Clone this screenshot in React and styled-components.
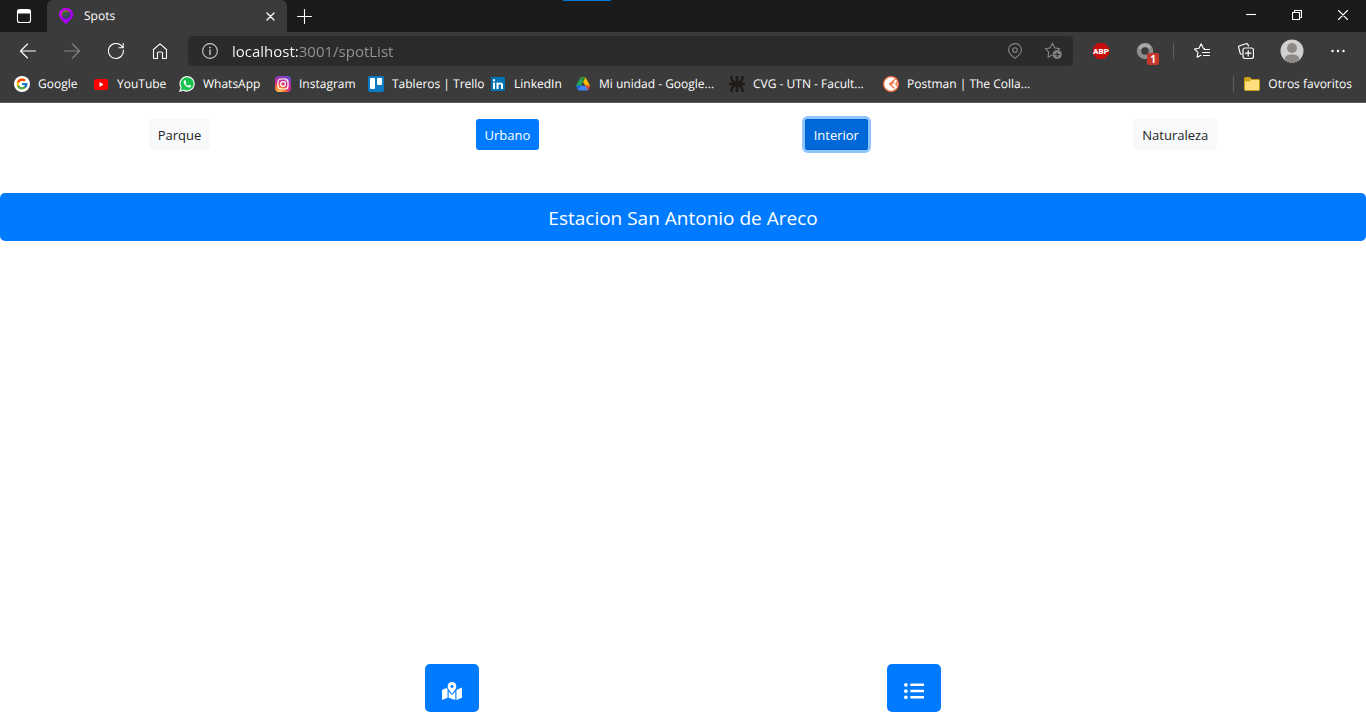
import React, { useState } from "react";
import styled, { createGlobalStyle, css } from "styled-components";
import { FaMapMarkedAlt, FaListUl } from "react-icons/fa";
import { FcGoogle } from "react-icons/fc";

const GlobalStyle = createGlobalStyle`
  *, *::before, *::after { box-sizing: border-box; }
  body {
    margin: 0;
    background: #fff;
    font-family: "Open Sans", "Noto Sans", sans-serif;
    text-rendering: geometricPrecision;
  }
  button { font-family: inherit; cursor: pointer; }
`;

const Window = styled.div`
  display: flex;
  flex-direction: column;
  min-height: 100vh;
`;

const Chrome = styled.header`
  background: #3b3b3b;
  color: #fff;
  border-bottom: 1px solid #5c5c5c;
`;

const TabStrip = styled.div`
  position: relative;
  display: flex;
  height: 32px;
  background: #1b1b1b;
`;

const LoadingMark = styled.span`
  position: absolute;
  top: 0;
  left: 563px;
  width: 48px;
  height: 1px;
  background: #0078d7;
`;

const ChromeButton = styled.button`
  display: flex;
  flex: none;
  align-items: center;
  justify-content: center;
  width: ${(p) => p.$width || 44}px;
  height: 32px;
  padding: 0;
  border: 0;
  background: none;
  color: ${(p) => (p.$muted ? "#858585" : "#fff")};
`;

const Tab = styled.div`
  display: flex;
  align-items: center;
  width: 240px;
  height: 32px;
  padding: 0 4px 0 11px;
  border-radius: 6px 6px 0 0;
  background: #3b3b3b;
`;

const TabTitle = styled.span`
  flex: 1;
  padding-left: 10px;
  font-size: 12px;
  line-height: 16px;
`;

const WindowControls = styled.div`
  display: flex;
  height: 30px;
  align-items: center;
  margin-left: auto;
`;

const Toolbar = styled.div`
  display: flex;
  align-items: center;
  height: 38px;
  padding: 0 6px;
`;

const AddressBar = styled.label`
  display: flex;
  flex: 1;
  align-items: center;
  height: 30px;
  margin: 0 6px;
  padding: 0 1px 0 0;
  border-radius: 4px;
  background: #2b2b2b;
`;

const AddressInput = styled.input`
  flex: 1;
  min-width: 0;
  height: 24px;
  padding: 0;
  border: 0;
  outline: 0;
  background: linear-gradient(90deg, #fff 66px, #969696 66px);
  background-clip: text;
  -webkit-background-clip: text;
  color: transparent;
  font-family: inherit;
  font-size: 15px;
  line-height: 24px;
`;

const Divider = styled.span`
  flex: none;
  width: 1px;
  height: 16px;
  margin: 0 6px;
  background: #5e5e5e;
`;

const ProfileGroup = styled.div`
  display: flex;
  gap: 2px;
  padding-left: 2px;
`;

const BadgedIcon = styled.span`
  position: relative;
  display: flex;
`;

const Badge = styled.span`
  position: absolute;
  top: 11px;
  left: 11px;
  width: 12px;
  height: 12px;
  border-radius: 2px;
  background: #c5372c;
  color: #fff;
  font-size: 10px;
  font-weight: 700;
  line-height: 12px;
  text-align: center;
`;

const BookmarksBar = styled.nav`
  display: flex;
  align-items: center;
  height: 32px;
  padding: 0 14px 4px;
`;

const Bookmark = styled.a`
  display: flex;
  flex: none;
  align-items: center;
  gap: 8px;
  width: ${(p) => (p.$width ? `${p.$width}px` : "auto")};
  color: #fff;
  font-size: 12px;
  line-height: 16px;
  text-decoration: none;
  white-space: nowrap;

  svg { flex: none; }
`;

const OtherBookmarks = styled.div`
  display: flex;
  align-items: center;
  margin-left: auto;
  gap: 10px;
`;

const BarRule = styled.span`
  width: 1px;
  height: 16px;
  background: #5e5e5e;
`;

const Page = styled.main`
  display: flex;
  flex: 1;
  flex-direction: column;
`;

const Filters = styled.div`
  display: flex;
  justify-content: space-around;
  padding: 16px 16px 43px;
`;

const variants = {
  light: css`
    background: #f8f9fa;
    color: #212529;
  `,
  primary: css`
    background: #007bff;
    color: #fff;
  `,
  active: css`
    background: #0069d9;
    color: #fff;
    box-shadow: inset 0 0 0 1px #0062cc, 0 0 0 3px #8ec5ff;
  `,
};

const FilterButton = styled.button`
  height: 31px;
  padding: 2px 9px 0;
  border: 0;
  border-radius: 3px;
  font-size: 13px;
  line-height: 21px;
  ${(p) => variants[p.$variant]}
`;

const SpotButton = styled.button`
  width: 100%;
  height: 48px;
  padding: 2px 16px 0;
  border: 0;
  border-radius: 5px;
  background: #007bff;
  color: #fff;
  font-size: 19px;
  line-height: 30px;
`;

const ViewSwitch = styled.footer`
  display: flex;
  justify-content: space-evenly;
  margin-top: auto;
  padding: 16px 16px 15px;
`;

const ViewButton = styled.button`
  height: 48px;
  padding: 10px 17px 8px;
  border: 0;
  border-radius: 5px;
  background: #007bff;
  color: #fff;
  font-size: 20px;
  line-height: 30px;

  svg { vertical-align: middle; }
`;

const Line = ({ size = 16, children, ...rest }) => (
  <svg width={size} height={size} viewBox={`0 0 ${size} ${size}`} fill="none" stroke="currentColor" strokeWidth="1.1" strokeLinejoin="round" strokeLinecap="round" aria-hidden="true" {...rest}>
    {children}
  </svg>
);

const TabsIcon = () => (
  <Line>
    <rect x="1.5" y="1.5" width="13" height="13" rx="2" />
    <path d="M2 2.5h12v2.5H2z" fill="currentColor" />
  </Line>
);
const SpotsIcon = () => (
  <svg width="16" height="16" viewBox="0 0 16 16" aria-hidden="true">
    <path d="M8 0C4 0 1 3 1 6.600 1 10.500 5 12.500 8 16c3-3.500 7-5.500 7-9.400C15 3 12 0 8 0z" fill="#c800ff" />
    <path d="M15 6.600C15 10.500 11 12.500 8 16 7 14.800 5 13 3.800 11.800L13.500 2.500C14.500 3.700 15 5 15 6.600z" fill="#a300f5" />
    <circle cx="8" cy="6.800" r="4.300" fill="#38405c" />
    <path d="M4 8.500C3 5 5.200 2.300 8.500 2.300l3 1.600-6 .8z" fill="#6b8708" />
    <path d="M5.500 5.500h5v3h-5z" fill="#40525a" />
  </svg>
);
const CloseIcon = () => <Line size={9} strokeWidth="1.300"><path d="M1 1l7 7M8 1l-7 7" /></Line>;
const PlusIcon = () => <Line size={15}><path d="M7.500.5v14M.5 7.500h14" /></Line>;
const MinimizeIcon = () => <Line size={10} strokeLinecap="butt"><path d="M0 4.500h10" /></Line>;
const RestoreIcon = () => <Line size={10} strokeLinejoin="miter"><path d="M.5 2.500h7v7h-7zM2.500 2.500v-2h7v7h-2" /></Line>;
const BigCloseIcon = () => <Line size={10}><path d="M.5.5l9 9M9.500.5l-9 9" /></Line>;
const BackIcon = () => <Line><path d="M15.500 8H.7M7.500 1L.5 8l7 7" /></Line>;
const ForwardIcon = () => <Line><path d="M.5 8h14.800M8.500 1l7 7-7 7" /></Line>;
const ReloadIcon = () => <Line><path d="M15.400 7.200A7.500 7.500 0 1 1 13.300 2.700L15 4.500M15.200.5v4.200H11" /></Line>;
const HomeIcon = () => (
  <Line><path d="M1.500 6.500L8 .9l6.500 5.600v8.200a.8.800 0 0 1-.8.800h-3.200V10a1 1 0 0 0-1-1h-3a1 1 0 0 0-1 1v5.500H2.300a.8.800 0 0 1-.8-.8z" /></Line>
);
const InfoIcon = () => (
  <Line stroke="#c8c8c8"><circle cx="8" cy="8" r="7.400" /><path d="M8 7v4.500" strokeWidth="1.400" /><circle cx="8" cy="4.600" r=".4" /></Line>
);
const PinIcon = () => (
  <Line><path d="M8 .6a6.400 6.400 0 0 0-6.500 6.300c0 3.500 3.500 6 6.500 8.500 3-2.500 6.500-5 6.500-8.500A6.400 6.400 0 0 0 8 .6z" /><circle cx="8" cy="7" r="2.300" /></Line>
);
const StarAddIcon = () => (
  <Line size={18}>
    <path d="M8 13l-4 2.200.8-5L1.300 6.700l4.700-.8L8.500 1.200l2.300 4.700 5 .8-1.500 1.500" />
    <circle cx="13.200" cy="12.500" r="4.500" fill="currentColor" stroke="none" />
    <path d="M13.200 10.200v4.600M10.900 12.500h4.600" stroke="#2b2b2b" />
  </Line>
);
const AdblockIcon = () => (
  <svg width="18" height="18" viewBox="0 0 18 18" aria-hidden="true">
    <path d="M5.700 1h6.600L17 5.700v6.600L12.300 17H5.700L1 12.300V5.700z" fill="#c70d0d" />
    <text x="9" y="12" textAnchor="middle" fill="#fff" fontFamily="Roboto, sans-serif" fontWeight="900" fontSize="8">ABP</text>
  </svg>
);
const RingIcon = () => (
  <svg width="18" height="18" viewBox="0 0 18 18" aria-hidden="true">
    <circle cx="9" cy="9" r="6" fill="none" stroke="#8d8d8d" strokeWidth="4.500" />
    <path d="M3.500 7A6 6 0 0 1 14 6" fill="none" stroke="#ababab" strokeWidth="3" />
  </svg>
);
const FavoritesIcon = () => (
  <Line><path d="M10.500 5.500L9.300 5.300 7.200.8 5 5.300.5 6l3.400 3.300-.8 5L7 12.300M10 6.500h5.500M8.500 9.500h7M9.500 12.500h6" /></Line>
);
const CollectionsIcon = () => (
  <Line strokeWidth="1.200"><path d="M3.500 11.200L2.300 10.600.7 4.700a1.600 1.600 0 0 1 1-2L8 .7a1.600 1.600 0 0 1 2 1l.5 1.300" /><rect x="5" y="5" width="10.500" height="10.500" rx="2" /><path d="M10.200 7.500v5.500M7.500 10.200H13" /></Line>
);
const AvatarIcon = () => (
  <svg width="24" height="24" viewBox="0 0 24 24" aria-hidden="true">
    <circle cx="12" cy="12" r="11.500" fill="#d2d0ce" />
    <circle cx="12" cy="9" r="5" fill="#8e8985" />
    <path d="M4.500 20.500C5 16.500 8 15.500 12 15.500s7 1 7.500 5A11.500 11.500 0 0 1 12 23.500a11.500 11.500 0 0 1-7.500-3z" fill="#8e8985" />
  </svg>
);
const DotsIcon = () => (
  <svg width="14" height="4" viewBox="0 0 14 4" fill="#fff" aria-hidden="true">
    <circle cx="1.500" cy="2" r="1.200" /><circle cx="7" cy="2" r="1.200" /><circle cx="12.500" cy="2" r="1.200" />
  </svg>
);

const Logo = ({ children }) => (
  <svg width="16" height="16" viewBox="0 0 16 16" aria-hidden="true">{children}</svg>
);
const GoogleLogo = () => (
  <Logo><circle cx="8" cy="8" r="8" fill="#fff" /><FcGoogle x="1.500" y="1.500" width="13" height="13" size="13" /></Logo>
);
const YouTubeLogo = () => (
  <Logo><rect x="1" y="3" width="14" height="11" rx="2" fill="#f00" /><path d="M6.500 6v5l4-2.500z" fill="#fff" /></Logo>
);
const WhatsAppLogo = () => (
  <Logo>
    <path d="M8.200 0a7.800 7.800 0 0 0-6.700 11.700L0 16l4.500-1.200A7.800 7.800 0 1 0 8.200 0z" fill="#fff" />
    <path d="M8.200 1.200a6.600 6.600 0 0 0-5.500 10.200l-1 3.100 3.200-.9A6.600 6.600 0 1 0 8.200 1.200z" fill="#14c24c" />
    <path d="M5.700 4.200l-.9.700c-1 2.800 3.300 7 5.900 6.500.8-.2 1.500-.8 1.500-1.700l-2-1-1 1.100C7.900 9.300 7 8.400 6.500 7.200l.8-.9-.8-2z" fill="#fff" />
  </Logo>
);
const InstagramLogo = () => (
  <Logo>
    <defs>
      <radialGradient id="insta" cx=".25" cy="1.050" r="1.200">
        <stop offset="0" stopColor="#ffdc60" /><stop offset=".3" stopColor="#fa7b32" /><stop offset=".55" stopColor="#d92e7f" /><stop offset=".8" stopColor="#9b36b7" /><stop offset="1" stopColor="#515bd4" />
      </radialGradient>
    </defs>
    <rect width="16" height="16" rx="4" fill="url(#insta)" />
    <g fill="none" stroke="#fff" strokeWidth="1.200"><rect x="3" y="3" width="10" height="10" rx="3" /><circle cx="8" cy="8" r="2.400" /></g>
    <circle cx="11" cy="5" r=".7" fill="#fff" />
  </Logo>
);
const TrelloLogo = () => (
  <Logo><rect width="16" height="16" rx="2" fill="#0c7bc4" /><rect x="2" y="2" width="5" height="11" rx="1" fill="#fff" /><rect x="9" y="2" width="5" height="7" rx="1" fill="#fff" /></Logo>
);
const LinkedInLogo = () => (
  <Logo>
    <rect x="1" y="1" width="14" height="14" fill="#0274b3" />
    <path d="M3 6.500h2V13H3zM3 3.300h2v2H3zM6.500 6.500h2v.9c1-1.600 4.500-1.500 4.500 1.600v4h-2V9.500c0-1.700-2.500-1.700-2.500 0V13h-2z" fill="#fff" />
  </Logo>
);
const DriveLogo = () => (
  <Logo>
    <path d="M5.500 1.500h5L8 6 3.500 14 1 9.800z" fill="#22a45d" />
    <path d="M5.500 1.500h5l4.700 8.300h-4.800z" fill="#ffba00" />
    <path d="M5.500 1.500h5L8 6z" fill="#12833c" />
    <path d="M3.200 9.800H12.800L13 14.500H3.500L1 9.800z" fill="#3f84f3" />
    <path d="M1 9.800h4.300l-2 4.300z" fill="#1b62d1" />
    <path d="M10.500 9.800h4.700l-2.200 4.500z" fill="#e94435" />
  </Logo>
);
const UtnLogo = () => (
  <Logo>
    <path d="M8 0v16M0 8h16M2.200 0c0 9.400 11.600 9.400 11.600 0M2.200 16c0-9.400 11.600-9.400 11.600 0" fill="none" stroke="#211b18" strokeWidth="2.600" />
  </Logo>
);
const PostmanLogo = () => (
  <Logo>
    <circle cx="8" cy="8" r="7.400" fill="#fff" stroke="#f26b3a" strokeWidth="1.200" />
    <path d="M12.500 3L6.500 8l5 4.500M8 8.500L11 6M13 6c1.200 1 1.200 3 0 4" fill="none" stroke="#f26b3a" strokeWidth="1.100" />
    <circle cx="12.200" cy="8" r=".7" fill="#f26b3a" />
  </Logo>
);
const FolderIcon = () => (
  <Logo>
    <path d="M.5 2.500a1 1 0 0 1 1-1H6l1.500 2h7a1 1 0 0 1 1 1v9a1 1 0 0 1-1 1h-13a1 1 0 0 1-1-1z" fill="#ffdf7d" stroke="#c89a15" />
    <path d="M1 2h4.700l1.300 2-1.500 1.500H1z" fill="#d4a31c" />
  </Logo>
);

const bookmarks = [
  { name: "Google", Icon: GoogleLogo, width: 79, href: "#google" },
  { name: "YouTube", Icon: YouTubeLogo, width: 86, href: "#youtube" },
  { name: "WhatsApp", Icon: WhatsAppLogo, width: 96, href: "#whatsapp" },
  { name: "Instagram", Icon: InstagramLogo, width: 93, href: "#instagram" },
  { name: "Tableros | Trello", Icon: TrelloLogo, width: 122, href: "#trello" },
  { name: "LinkedIn", Icon: LinkedInLogo, width: 85, href: "#linkedin" },
  { name: "Mi unidad - Google...", Icon: DriveLogo, width: 154, href: "#drive" },
  { name: "CVG - UTN - Facult...", Icon: UtnLogo, width: 154, href: "#utn" },
  { name: "Postman | The Colla...", Icon: PostmanLogo, width: 154, href: "#postman" },
];

const filters = [
  { name: "Parque", variant: "light" },
  { name: "Urbano", variant: "primary" },
  { name: "Interior", variant: "active" },
  { name: "Naturaleza", variant: "light" },
];

export default function App() {
  const [url, setUrl] = useState("localhost:3001/spotList");
  return (
    <Window>
      <GlobalStyle />
      <Chrome>
        <TabStrip>
          <LoadingMark />
          <ChromeButton $width={47} aria-label="Tab actions"><TabsIcon /></ChromeButton>
          <Tab>
            <SpotsIcon />
            <TabTitle>Spots</TabTitle>
            <ChromeButton $width={26} aria-label="Close tab"><CloseIcon /></ChromeButton>
          </Tab>
          <ChromeButton $width={35} aria-label="New tab"><PlusIcon /></ChromeButton>
          <WindowControls>
            <ChromeButton $width={46} aria-label="Minimize"><MinimizeIcon /></ChromeButton>
            <ChromeButton $width={46} aria-label="Restore"><RestoreIcon /></ChromeButton>
            <ChromeButton $width={46} aria-label="Close window"><BigCloseIcon /></ChromeButton>
          </WindowControls>
        </TabStrip>
        <Toolbar>
          <ChromeButton aria-label="Back"><BackIcon /></ChromeButton>
          <ChromeButton $muted aria-label="Forward"><ForwardIcon /></ChromeButton>
          <ChromeButton aria-label="Reload"><ReloadIcon /></ChromeButton>
          <ChromeButton aria-label="Home"><HomeIcon /></ChromeButton>
          <AddressBar>
            <ChromeButton aria-label="Site information"><InfoIcon /></ChromeButton>
            <AddressInput aria-label="Address" value={url} onChange={(e) => setUrl(e.target.value)} />
            <ChromeButton $width={38} $muted aria-label="Location"><PinIcon /></ChromeButton>
            <ChromeButton $width={38} $muted aria-label="Add to favorites"><StarAddIcon /></ChromeButton>
          </AddressBar>
          <ChromeButton aria-label="Adblock Plus"><AdblockIcon /></ChromeButton>
          <ChromeButton aria-label="Extension">
            <BadgedIcon><RingIcon /><Badge>1</Badge></BadgedIcon>
          </ChromeButton>
          <Divider />
          <ChromeButton aria-label="Favorites"><FavoritesIcon /></ChromeButton>
          <ChromeButton aria-label="Collections"><CollectionsIcon /></ChromeButton>
          <ProfileGroup>
            <ChromeButton aria-label="Profile"><AvatarIcon /></ChromeButton>
            <ChromeButton aria-label="More"><DotsIcon /></ChromeButton>
          </ProfileGroup>
        </Toolbar>
        <BookmarksBar>
          {bookmarks.map(({ name, Icon, width, href }) => (
            <Bookmark key={name} href={href} $width={width}><Icon />{name}</Bookmark>
          ))}
          <OtherBookmarks>
            <BarRule />
            <Bookmark href="#otros"><FolderIcon />Otros favoritos</Bookmark>
          </OtherBookmarks>
        </BookmarksBar>
      </Chrome>
      <Page>
        <Filters>
          {filters.map(({ name, variant }) => (
            <FilterButton key={name} $variant={variant}>{name}</FilterButton>
          ))}
        </Filters>
        <SpotButton>Estacion San Antonio de Areco</SpotButton>
        <ViewSwitch>
          <ViewButton aria-label="Map"><FaMapMarkedAlt size={20} /></ViewButton>
          <ViewButton aria-label="List"><FaListUl size={20} /></ViewButton>
        </ViewSwitch>
      </Page>
    </Window>
  );
}
